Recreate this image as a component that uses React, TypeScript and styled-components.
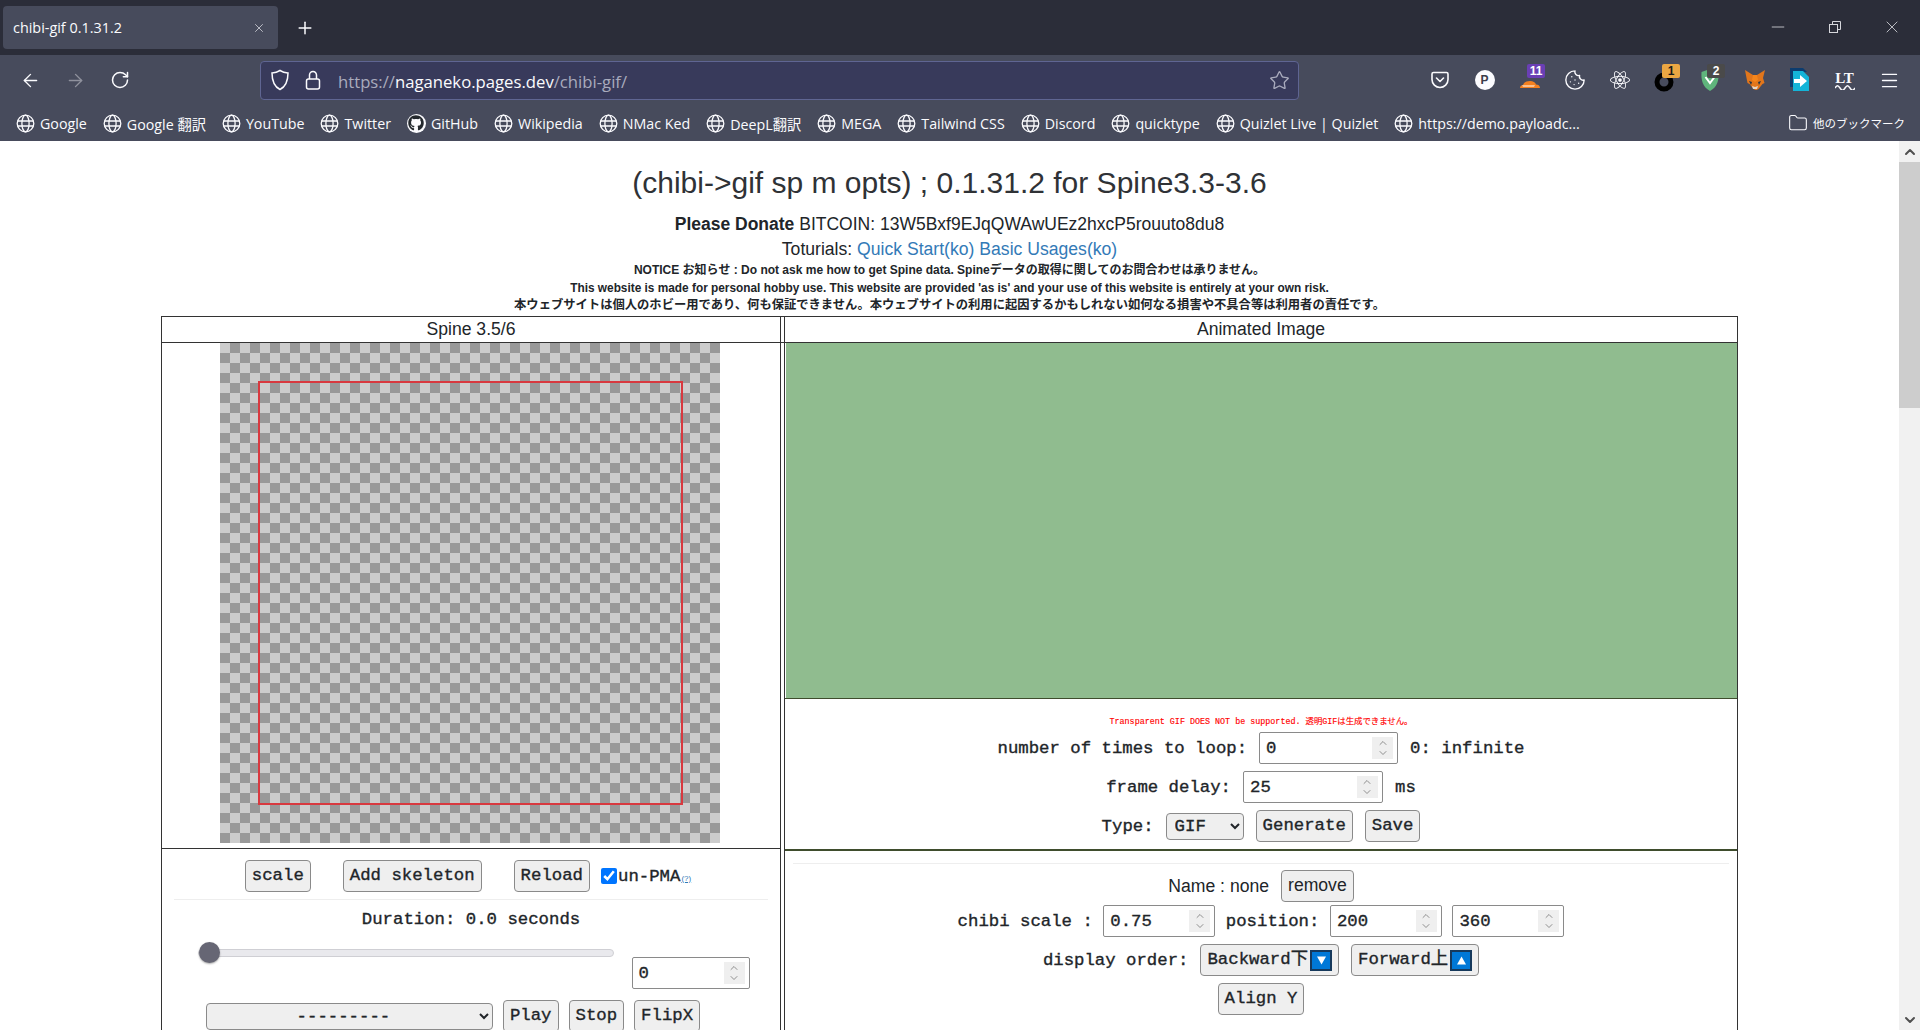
import React from 'react';
import styled, { createGlobalStyle } from 'styled-components';
import { ArrowLeft, ArrowRight, RotateCw, Plus, X, Star, Cookie, Menu, Minus, ChevronUp, ChevronDown, Folder } from 'lucide-react';
import { FaGithub, FaReact } from 'react-icons/fa';

const UI_FONT = `"Open Sans", "Noto Sans CJK JP", sans-serif`;
const SANS = `"Liberation Sans", "Noto Sans CJK JP", sans-serif`;
const MONO = `"Liberation Mono", "Noto Sans CJK JP", monospace`;

const GlobalStyle = createGlobalStyle`
    html, body {
        margin: 0;
        height: 100%;
        overflow: hidden;
        background: #fff;
    }
    * {
        box-sizing: border-box;
    }
`;

const Window = styled.div`
    width: 1920px;
    height: 1030px;
    display: flex;
    flex-direction: column;
    overflow: hidden;
`;

const TitleBar = styled.div`
    height: 55px;
    flex: none;
    background: #2b2d39;
    display: flex;
    align-items: flex-start;
    color: #fbfbfe;
    font-family: ${UI_FONT};
`;

const Tab = styled.div`
    width: 275px;
    height: 43px;
    margin: 6px 0 0 3px;
    padding: 0 12px 0 10px;
    border-radius: 4px;
    background: #474b5c;
    display: flex;
    align-items: center;
    justify-content: space-between;
    font-size: 14.4px;
`;

const NewTab = styled.div`
    margin: 18px 0 0 17px;
    display: flex;
`;

const WindowButtons = styled.div`
    margin-left: auto;
    margin-top: 17px;
    margin-right: 18px;
    display: flex;
    gap: 37px;
    align-items: center;
    height: 20px;
`;

const RestoreIcon = () => (
    <svg width="20" height="20" viewBox="0 0 20 20" fill="none" stroke="#d6d7dc" strokeWidth="1">
        <rect x="4.5" y="7.5" width="8" height="8" />
        <path d="M7.5 7.5V4.5h8v8h-3" />
    </svg>
);

const ToolBar = styled.div`
    height: 50px;
    flex: none;
    padding: 0 7.5px;
    background: #474b5c;
    display: flex;
    align-items: center;
    color: #fbfbfe;
`;

const ToolSlot = styled.div<{ $dim?: boolean }>`
    position: relative;
    width: 45px;
    height: 32px;
    flex: none;
    display: flex;
    align-items: center;
    justify-content: center;
    opacity: ${props => (props.$dim ? 0.4 : 1)};
`;

const UrlBar = styled.div`
    width: 1039px;
    height: 39px;
    margin-left: 117.5px;
    margin-right: 118px;
    flex: none;
    padding: 0 8px 0 9px;
    border: 1px solid #5f6592;
    border-radius: 4px;
    background: #383a5b;
    display: flex;
    align-items: center;
    gap: 14px;
    font-family: ${UI_FONT};
    font-size: 16.7px;
    color: #a9abbd;
`;

const UrlText = styled.div`
    flex: 1;
    margin-left: 2px;
    padding-top: 2px;
    strong {
        font-weight: 400;
        color: #fbfbfe;
    }
`;

const Badge = styled.span<{ $bg: string; $fg?: string }>`
    position: absolute;
    top: 0;
    left: 20px;
    min-width: 18px;
    height: 14px;
    padding: 0 2px;
    border-radius: 2px;
    background: ${props => props.$bg};
    color: ${props => props.$fg || '#fff'};
    font-family: ${SANS};
    font-size: 12px;
    font-weight: 700;
    line-height: 14px;
    text-align: center;
`;

const PIcon = styled.div`
    width: 20px;
    height: 20px;
    border-radius: 50%;
    background: #fbfbfe;
    color: #3b3d4a;
    font-family: ${SANS};
    font-size: 12px;
    font-weight: 700;
    line-height: 20px;
    text-align: center;
`;

const LtIcon = styled.div`
    display: flex;
    flex-direction: column;
    align-items: center;
    font-family: "Liberation Serif", serif;
    font-size: 15px;
    font-weight: 700;
    line-height: 14px;
    color: #fbfbfe;
    svg {
        display: block;
    }
`;

const BookmarkBar = styled.div`
    height: 36px;
    flex: none;
    padding: 0 15px 0 16px;
    background: #474b5c;
    display: flex;
    align-items: center;
    gap: 16px;
    color: #fbfbfe;
    font-family: ${UI_FONT};
    font-size: 14.25px;
`;

const Bookmark = styled.div`
    display: flex;
    align-items: center;
    gap: 5px;
    white-space: nowrap;
`;

const OtherBookmarks = styled(Bookmark)`
    margin-left: auto;
    font-size: 11.5px;
    svg {
        flex: none;
    }
`;

const GithubBadge = styled.span`
    width: 19px;
    height: 19px;
    border-radius: 50%;
    background: #fbfbfe;
    display: flex;
    align-items: center;
    justify-content: center;
    color: #24292e;
`;

const Globe = () => (
    <svg width="19" height="19" viewBox="0 0 19 19" fill="none" stroke="#fbfbfe" strokeWidth="1.3">
        <circle cx="9.5" cy="9.5" r="8.3" />
        <ellipse cx="9.5" cy="9.5" rx="3.6" ry="8.3" />
        <path d="M1.6 7h15.8M1.6 12h15.8" />
    </svg>
);

const ShieldIcon = () => (
    <svg width="20" height="22" viewBox="0 0 20 22" fill="none" stroke="#fbfbfe" strokeWidth="1.5">
        <path d="M10 1.5c2.5 1.6 5 2.3 8 2.4 0 7-1.2 13-8 16.6C3.200 16.900 2 10.900 2 3.900c3-.1 5.500-.8 8-2.400z" />
    </svg>
);

const LockIcon = () => (
    <svg width="18" height="22" viewBox="0 0 18 22" fill="none" stroke="#fbfbfe" strokeWidth="1.5">
        <rect x="2.500" y="10" width="13" height="10" rx="2" />
        <path d="M5.500 10V6a3.500 3.500 0 0 1 7 0v4" />
    </svg>
);

const PocketIcon = () => (
    <svg width="20" height="20" viewBox="0 0 20 20" fill="none" stroke="#fbfbfe" strokeWidth="1.6">
        <path d="M3.500 2.500h13a1.500 1.500 0 0 1 1.500 1.500v5.500a8 8 0 0 1-16 0V4a1.500 1.500 0 0 1 1.500-1.500z" />
        <path d="M6.500 8l3.500 3.500L13.500 8" strokeLinecap="round" strokeLinejoin="round" />
    </svg>
);

const CloudIcon = () => (
    <svg width="22" height="22" viewBox="0 0 22 22">
        <path d="M1 19c0-2 1.500-3 3-3 1-2.500 3.500-4 7-4 3 0 5.500 1.500 6 3.500 2 0 4 1 4 3.500z" fill="#f38020" />
        <path d="M3 16.500h13l-1 1H4z" fill="#fff" />
    </svg>
);

const RingIcon = () => (
    <svg width="24" height="24" viewBox="0 0 24 24" fill="none" stroke="#000" strokeWidth="5">
        <circle cx="11" cy="14" r="7" />
    </svg>
);

const GreenShield = () => (
    <svg width="20" height="24" viewBox="0 0 20 24">
        <path d="M10 1l8.500 3c.5 8-1 15-8.500 19C2.500 19 1 12 1.500 4z" fill="#5fb57c" />
        <path d="M5.500 9L10 15l4.500-6" fill="none" stroke="#fff" strokeWidth="2" />
    </svg>
);

const FoxIcon = () => (
    <svg width="22" height="22" viewBox="0 0 22 22">
        <path d="M1 1l8 5h4l8-5-2 8 1.500 5-2 1-4 5-2 1h-1l-2-1-4-5-2-1L2.500 9z" fill="#e2761b" />
        <path d="M5 12l3 1-1 3zM17 12l-3 1 1 3z" fill="#233447" />
        <path d="M8 17l3 1 3-1-1 3H9z" fill="#e4d7c9" />
        <path d="M9 6h4l1 5-3 2-3-2z" fill="#f6851b" />
    </svg>
);

const SendFileIcon = () => (
    <svg width="20" height="24" viewBox="0 0 20 24">
        <path d="M0 0h13l4 4H3v15H0z" fill="#0c3c6e" />
        <path d="M3 3h10l6 6v14H3z" fill="#14b4d8" />
        <path d="M4 11h6V7l7 6-7 6v-4H4z" fill="#fff" />
    </svg>
);

const Wave = () => (
    <svg width="20" height="5" viewBox="0 0 20 5" fill="none" stroke="#fbfbfe" strokeWidth="1.400">
        <path d="M0 3c2-3 3-3 5 0s3 3 5 0 3-3 5 0 3 3 5 0" />
    </svg>
);

const Viewport = styled.div`
    flex: 1;
    min-height: 0;
    display: flex;
    background: #fff;
`;

const Page = styled.div`
    flex: 1;
    min-width: 0;
    overflow: hidden;
    padding-top: 24px;
    font-family: ${SANS};
    color: #212529;
    text-align: center;
`;

const Scrollbar = styled.div`
    width: 21px;
    flex: none;
    background: #f1f1f1;
    display: flex;
    flex-direction: column;
    color: #505050;
`;

const ScrollArrow = styled.div`
    height: 21px;
    flex: none;
    display: flex;
    align-items: center;
    justify-content: center;
`;

const ScrollThumb = styled.div`
    height: 246px;
    flex: none;
    margin-bottom: auto;
    background: #cdcdcd;
`;

const Heading = styled.h1`
    margin: 0 0 11px;
    font-size: 30px;
    font-weight: 400;
    line-height: 36px;
    color: #2f3236;
`;

const IntroLine = styled.div<{ $size?: number }>`
    font-size: ${props => props.$size ?? 17.6}px;
    line-height: 24.500px;
    a {
        color: #337ab7;
        text-decoration: none;
    }
`;

const Notice = styled.div`
    padding-top: 1px;
    margin-bottom: 1.500px;
    font-weight: 700;
`;

const NoticeLine = styled.div<{ $size: number }>`
    height: 17.500px;
    font-size: ${props => props.$size}px;
    line-height: 17.500px;
`;

const Frame = styled.div`
    width: 1577px;
    margin-left: 161px;
    font-size: 17.6px;
`;

const HeadRow = styled.div`
    display: grid;
    grid-template-columns: 620px 1fr;
    height: 27px;
    border-top: 1px solid #333;
    border-bottom: 1px solid #333;
    line-height: 24px;
`;

const HeadCell = styled.div`
    border-left: 1px solid #333;
    border-right: 1px solid #333;
`;

const HeadCellRight = styled(HeadCell)`
    margin-left: 3px;
`;

const Columns = styled.div`
    display: grid;
    grid-template-columns: 620px 1fr;
    align-items: start;
`;

const LeftColumn = styled.div`
    height: 700px;
    border-left: 1px solid #333;
    border-right: 1px solid #333;
`;

const RightColumn = styled.div`
    height: 700px;
    margin-left: 3px;
    border-left: 1px solid #333;
    border-right: 1px solid #333;
`;

const CanvasCell = styled.div`
    height: 506px;
    border-bottom: 1px solid #333;
    display: flex;
    justify-content: center;
    padding: 0 2px 0 0;
`;

const Checker = styled.div`
    width: 500px;
    height: 500px;
    padding: 38px 38px 38px 37.500px;
    background-color: #ccc;
    background-image:
        linear-gradient(45deg, #999 25%, transparent 25%, transparent 75%, #999 75%),
        linear-gradient(45deg, #999 25%, transparent 25%, transparent 75%, #999 75%);
    background-size: 20px 20px;
    background-position: 0 0, 10px 10px;
`;

const RedFrame = styled.div`
    width: 425px;
    height: 424px;
    border: 2px solid #d8393f;
`;

const Controls = styled.div`
    display: flex;
    flex-direction: column;
    align-items: center;
    font-family: ${MONO};
    font-size: 17.33px;
    color: #212529;
    -webkit-text-stroke: 0.35px #212529;
`;

const Row = styled.div<{ $gap?: number; $mt?: number }>`
    display: flex;
    align-items: center;
    justify-content: center;
    height: 32px;
    gap: ${props => props.$gap ?? 12}px;
    margin-top: ${props => props.$mt ?? 0}px;
    white-space: nowrap;
`;

const PlayerRow = styled(Row)`
    padding-right: 36px;
`;

const Rule = styled.div<{ $mt: number; $mb: number; $width: number }>`
    width: ${props => props.$width}px;
    height: 1px;
    margin: ${props => props.$mt}px auto ${props => props.$mb}px;
    background: #eeeeee;
`;

const Button = styled.button`
    height: 32px;
    padding: 0 6px;
    border: 1px solid #8a8a8a;
    border-radius: 4px;
    background: #efefef;
    color: #212529;
    font: inherit;
    line-height: 1;
    white-space: nowrap;
    display: inline-flex;
    align-items: center;
    -webkit-text-stroke: inherit;
`;

const SansButton = styled(Button)`
    font-family: ${SANS};
    font-size: 17.6px;
    -webkit-text-stroke: 0;
`;

const Check = styled.input`
    width: 16px;
    height: 16px;
    margin: 0 1px 0 0;
`;

const CheckLabel = styled.label`
    display: flex;
    align-items: center;
`;

const Help = styled.a`
    margin: 4px 6px 0 1px;
    font-family: ${SANS};
    font-size: 8px;
    color: #337ab7;
    -webkit-text-stroke: 0;
`;

const DurationLine = styled.div`
    height: 20px;
    line-height: 20px;
    margin-bottom: 12px;
`;

const SliderRow = styled.div`
    width: 552px;
    height: 58px;
    margin-left: 5px;
    display: flex;
    justify-content: space-between;
    align-items: flex-start;
`;

const Slider = styled.input`
    width: 416px;
    height: 21px;
    margin: 0;
    appearance: none;
    background: transparent;
    &::-webkit-slider-runnable-track {
        height: 8px;
        border: 1px solid #cfcfd4;
        border-radius: 4px;
        background: #e9e9ed;
    }
    &::-webkit-slider-thumb {
        appearance: none;
        width: 21px;
        height: 21px;
        margin-top: -7.500px;
        border-radius: 50%;
        background: #666674;
        box-shadow: 0 1px 2px rgba(0, 0, 0, 0.35);
    }
`;

const NumberOffset = styled.div`
    margin-top: 15px;
`;

const NumberBox = styled.div<{ $width: number }>`
    width: ${props => props.$width}px;
    height: 32px;
    flex: none;
    padding: 0 4px 0 6px;
    border: 1px solid #8a8a8a;
    border-radius: 2px;
    background: #fff;
    display: flex;
    align-items: center;
    justify-content: space-between;
`;

const Spinner = styled.span`
    width: 21px;
    height: 22px;
    background: #efefef;
    display: flex;
    flex-direction: column;
    align-items: center;
    justify-content: center;
    color: #6f6f6f;
    -webkit-text-stroke: 0;
    svg {
        display: block;
        margin: -1px 0;
    }
`;

const Select = styled.select<{ $width: number }>`
    width: ${props => props.$width}px;
    height: 27px;
    padding: 0 4px;
    border: 1px solid #8a8a8a;
    border-radius: 4px;
    background-color: #efefef;
    color: #212529;
    font: inherit;
    text-align: center;
    -webkit-text-stroke: inherit;
`;

const TypeSelect = styled(Select)`
    text-align: left;
`;

const PreviewPanel = styled.div`
    height: 355px;
    margin-left: 1px;
    background: #90bc8f;
`;

const OutputPanel = styled.div`
    width: 100%;
    height: 153px;
    padding-top: 17px;
    border-top: 1px solid #3f4d2d;
    border-bottom: 2px solid #3f4d2d;
`;

const RedNote = styled.div`
    height: 12px;
    margin-bottom: 4px;
    font-size: 8.400px;
    line-height: 12px;
    text-align: center;
    color: #f00;
    -webkit-text-stroke: 0.15px #f00;
`;

const NameText = styled.span`
    font-family: ${SANS};
    font-size: 17.6px;
    -webkit-text-stroke: 0;
`;

const OrderIcon = styled.span`
    width: 22px;
    height: 21px;
    margin-left: 2px;
    border: 2px solid #16395c;
    background: #0078d7;
    display: inline-flex;
    align-items: center;
    justify-content: center;
    -webkit-text-stroke: 0;
`;

const OrderGlyph = ({ up }: { up?: boolean }) => (
    <svg width="11" height="11" viewBox="0 0 11 11">
        <path d={up ? 'M5.500 1.500L10 9.500H1z' : 'M5.500 9.500L10 1.500H1z'} fill="#fff" />
    </svg>
);

const NumberField = ({ width, value }: { width: number; value: string }) => (
    <NumberBox $width={width}>
        <span>{value}</span>
        <Spinner>
            <ChevronUp size={12} strokeWidth={1.500} />
            <ChevronDown size={12} strokeWidth={1.500} />
        </Spinner>
    </NumberBox>
);

const bookmarks = [
    'Google', 'Google 翻訳', 'YouTube', 'Twitter', 'GitHub', 'Wikipedia', 'NMac Ked', 'DeepL翻訳', 'MEGA',
    'Tailwind CSS', 'Discord', 'quicktype', 'Quizlet Live | Quizlet', 'https://demo.payloadc...',
];

export default function App() {
    return (
        <Window>
            <GlobalStyle />
            <TitleBar>
                <Tab>
                    <span>chibi-gif 0.1.31.2</span>
                    <X size={14} strokeWidth={1.500} color="#c9cad2" />
                </Tab>
                <NewTab><Plus size={20} strokeWidth={1.800} /></NewTab>
                <WindowButtons>
                    <Minus size={20} strokeWidth={1} color="#d6d7dc" />
                    <RestoreIcon />
                    <X size={20} strokeWidth={1} color="#d6d7dc" />
                </WindowButtons>
            </TitleBar>
            <ToolBar>
                <ToolSlot><ArrowLeft size={21} strokeWidth={1.600} /></ToolSlot>
                <ToolSlot $dim><ArrowRight size={21} strokeWidth={1.600} /></ToolSlot>
                <ToolSlot><RotateCw size={20} strokeWidth={1.800} /></ToolSlot>
                <UrlBar>
                    <ShieldIcon />
                    <LockIcon />
                    <UrlText>https://<strong>naganeko.pages.dev</strong>/chibi-gif/</UrlText>
                    <Star size={21} strokeWidth={1.500} />
                </UrlBar>
                <ToolSlot><PocketIcon /></ToolSlot>
                <ToolSlot><PIcon>P</PIcon></ToolSlot>
                <ToolSlot><CloudIcon /><Badge $bg="#6a3fb5">11</Badge></ToolSlot>
                <ToolSlot><Cookie size={22} strokeWidth={1.500} /></ToolSlot>
                <ToolSlot><FaReact size={20} /></ToolSlot>
                <ToolSlot><RingIcon /><Badge $bg="#eba743" $fg="#1a1a1a">1</Badge></ToolSlot>
                <ToolSlot><GreenShield /><Badge $bg="#4a4a4a">2</Badge></ToolSlot>
                <ToolSlot><FoxIcon /></ToolSlot>
                <ToolSlot><SendFileIcon /></ToolSlot>
                <ToolSlot><LtIcon>LT<Wave /></LtIcon></ToolSlot>
                <ToolSlot><Menu size={21} strokeWidth={1.500} /></ToolSlot>
            </ToolBar>
            <BookmarkBar>
                {bookmarks.map(name => (
                    <Bookmark key={name}>
                        {name === 'GitHub' ? <GithubBadge><FaGithub size={16} /></GithubBadge> : <Globe />}
                        {name}
                    </Bookmark>
                ))}
                <OtherBookmarks>
                    <Folder size={20} strokeWidth={1.300} />
                    他のブックマーク
                </OtherBookmarks>
            </BookmarkBar>
            <Viewport>
                <Page>
                    <Heading>(chibi-&gt;gif sp m opts) ; 0.1.31.2 for Spine3.3-3.6</Heading>
                    <IntroLine $size={17.5}><b>Please Donate</b> BITCOIN: 13W5Bxf9EJqQWAwUEz2hxcP5rouuto8du8</IntroLine>
                    <IntroLine>Toturials: <a href="#quick">Quick Start(ko)</a> <a href="#basic">Basic Usages(ko)</a></IntroLine>
                    <Notice>
                        <NoticeLine $size={12}>NOTICE お知らせ : Do not ask me how to get Spine data. Spineデータの取得に関してのお問合わせは承りません。</NoticeLine>
                        <NoticeLine $size={11.85}>This website is made for personal hobby use. This website are provided 'as is' and your use of this website is entirely at your own risk.</NoticeLine>
                        <NoticeLine $size={12.3}>本ウェブサイトは個人のホビー用であり、何も保証できません。本ウェブサイトの利用に起因するかもしれない如何なる損害や不具合等は利用者の責任です。</NoticeLine>
                    </Notice>
                    <Frame>
                        <HeadRow>
                            <HeadCell>Spine 3.5/6</HeadCell>
                            <HeadCellRight>Animated Image</HeadCellRight>
                        </HeadRow>
                        <Columns>
                            <LeftColumn>
                                <CanvasCell>
                                    <Checker><RedFrame /></Checker>
                                </CanvasCell>
                                <Controls>
                                    <Row $gap={32} $mt={11}>
                                        <Button>scale</Button>
                                        <Button>Add skeleton</Button>
                                        <Row $gap={11}>
                                            <Button>Reload</Button>
                                            <CheckLabel>
                                                <Check type="checkbox" defaultChecked />
                                                un-PMA<Help href="#pma">(?)</Help>
                                            </CheckLabel>
                                        </Row>
                                    </Row>
                                    <Rule $width={594} $mt={7} $mb={10} />
                                    <DurationLine>Duration: 0.0 seconds</DurationLine>
                                    <SliderRow>
                                        <Slider type="range" min={0} max={100} defaultValue={0} />
                                        <NumberOffset><NumberField width={118} value="0" /></NumberOffset>
                                    </SliderRow>
                                    <PlayerRow $gap={10}>
                                        <Select $width={287} defaultValue="none">
                                            <option value="none">---------</option>
                                        </Select>
                                        <Button>Play</Button>
                                        <Button>Stop</Button>
                                        <Button>FlipX</Button>
                                    </PlayerRow>
                                </Controls>
                            </LeftColumn>
                            <RightColumn>
                                <PreviewPanel />
                                <Controls>
                                    <OutputPanel>
                                        <RedNote>Transparent GIF DOES NOT be supported. 透明GIFは生成できません。</RedNote>
                                        <Row>
                                            number of times to loop:
                                            <NumberField width={139} value="0" />
                                            0: infinite
                                        </Row>
                                        <Row $mt={7}>
                                            frame delay:
                                            <NumberField width={140} value="25" />
                                            ms
                                        </Row>
                                        <Row $mt={7}>
                                            Type:
                                            <TypeSelect $width={78} defaultValue="gif">
                                                <option value="gif">GIF</option>
                                            </TypeSelect>
                                            <Button>Generate</Button>
                                            <Button>Save</Button>
                                        </Row>
                                    </OutputPanel>
                                    <Rule $width={936} $mt={12} $mb={6} />
                                    <Row>
                                        <NameText>Name : none</NameText>
                                        <SansButton>remove</SansButton>
                                    </Row>
                                    <Row $gap={10.500} $mt={3}>
                                        chibi scale :
                                        <NumberField width={112} value="0.75" />
                                        position:
                                        <NumberField width={112} value="200" />
                                        <NumberField width={112} value="360" />
                                    </Row>
                                    <Row $mt={7}>
                                        display order:
                                        <Button>Backward下<OrderIcon><OrderGlyph /></OrderIcon></Button>
                                        <Button>Forward上<OrderIcon><OrderGlyph up /></OrderIcon></Button>
                                    </Row>
                                    <Row $mt={7}>
                                        <Button>Align Y</Button>
                                    </Row>
                                </Controls>
                            </RightColumn>
                        </Columns>
                    </Frame>
                </Page>
                <Scrollbar>
                    <ScrollArrow><ChevronUp size={16} strokeWidth={3} /></ScrollArrow>
                    <ScrollThumb />
                    <ScrollArrow><ChevronDown size={16} strokeWidth={3} /></ScrollArrow>
                </Scrollbar>
            </Viewport>
        </Window>
    );
}
